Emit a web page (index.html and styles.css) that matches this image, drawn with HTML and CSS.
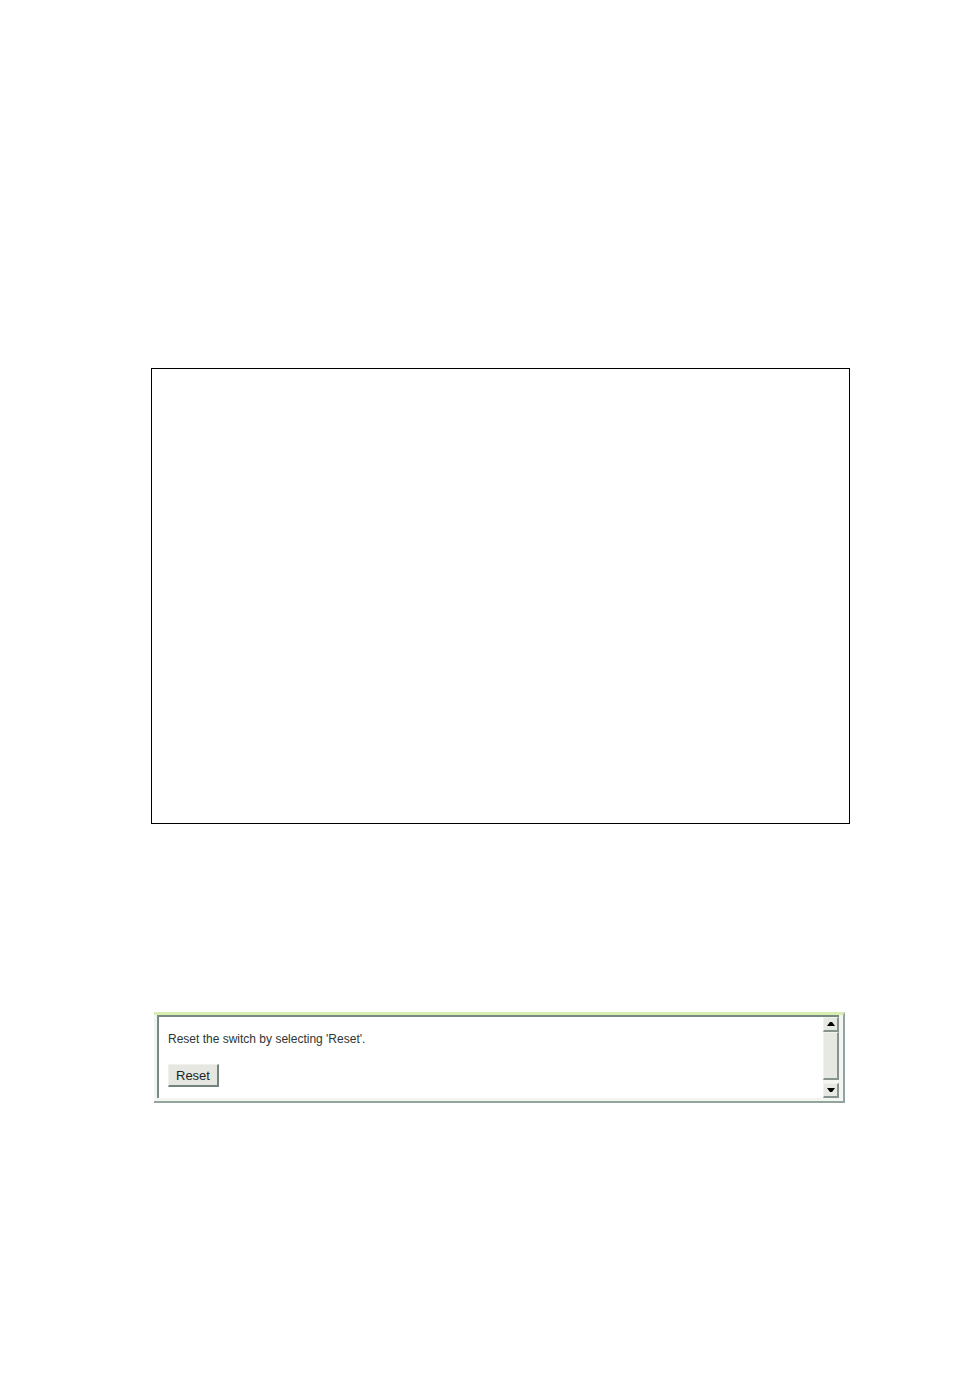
FILE: index.html
```
<!DOCTYPE html>
<html lang="en">
  <head>
    <meta charset="UTF-8" />
    <meta name="viewport" content="width=device-width, initial-scale=1.0" />
    <title>Reset</title>

    <link rel="stylesheet" href="styles.css">
  </head>
  <body>
    <main class="page">
      <section class="frame"></section>

      <section class="panel">
        <div class="window">
          <form class="content">
            <p class="message">Reset the switch by selecting 'Reset'.</p>
            <button type="button" class="reset">Reset</button>
          </form>

          <div class="scrollbar">
            <button type="button" class="arrow" aria-label="Scroll up">
              <svg width="8" height="4" viewBox="0 0 8 4"><path d="M3 0H5L8 4H0Z" /></svg>
            </button>
            <div class="track">
              <div class="thumb"></div>
            </div>
            <button type="button" class="arrow" aria-label="Scroll down">
              <svg width="8" height="4" viewBox="0 0 8 4"><path d="M0 0H8L5 4H3Z" /></svg>
            </button>
          </div>
        </div>
      </section>
    </main>
  </body>
</html>
```

FILE: styles.css
```
body {
  margin: 0;
  background: white;
  font-family: "Liberation Sans", Arial, sans-serif;
}

.page {
  padding: 368px 104px 32px 151px;
}

.frame {
  box-sizing: border-box;
  min-height: 456px;
  border: 1px solid black;
}

.panel {
  margin: 188px 5px 0 3px;
  padding: 0 4px 3px 3px;
  background: #f3f5f1;
  border-top: 3px solid #d8edb2;
  border-right: 2px solid #93a3a5;
  border-bottom: 2px solid #93a3a0;
}

.window {
  display: flex;
  background: white;
  border-top: 2px solid #788a80;
  border-left: 2px solid #788a86;
}

.content {
  flex: 1;
  padding: 15px 9px 11px;
}

.message {
  margin: 0 0 17px;
  font-size: 12px;
  line-height: 15px;
  color: #2c3634;
}

.reset {
  display: block;
  height: 23px;
  padding: 0 7px;
  background: #e5e7e0;
  border: 1px solid #eff1ec;
  border-right: 2px solid #74827e;
  border-bottom: 2px solid #74827e;
  font-family: inherit;
  font-size: 13px;
  color: #20221f;
}

.scrollbar {
  display: flex;
  flex-direction: column;
  width: 16px;
  background: #f5f6f3;
}

.arrow,
.thumb {
  box-sizing: border-box;
  background: #e6e8e2;
  border: 1px solid #f0f2ed;
  border-right: 2px solid #87938f;
  border-bottom: 2px solid #87938f;
}

.arrow {
  display: flex;
  align-items: center;
  justify-content: center;
  height: 15px;
  padding: 0;
}

.track {
  flex: 1;
  padding-bottom: 3px;
}

.thumb {
  height: 100%;
}
```
